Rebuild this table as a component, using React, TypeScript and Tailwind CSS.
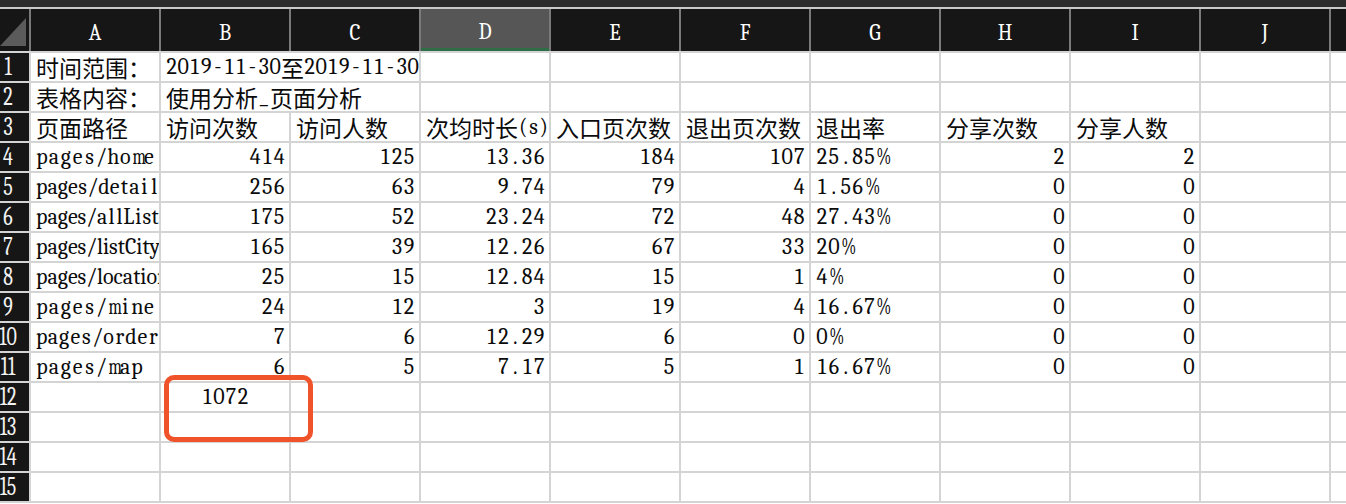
const cols = ["A", "B", "C", "D", "E", "F", "G", "H", "I", "J"]

const data: string[][] = [
  ["时间范围：", "2019-11-30至2019-11-30"],
  ["表格内容：", "使用分析_页面分析"],
  ["页面路径", "访问次数", "访问人数", "次均时长(s)", "入口页次数", "退出页次数", "退出率", "分享次数", "分享人数"],
  ["pages/home", "414", "125", "13.36", "184", "107", "25.85%", "2", "2"],
  ["pages/detail", "256", "63", "9.74", "79", "4", "1.56%", "0", "0"],
  ["pages/allList", "175", "52", "23.24", "72", "48", "27.43%", "0", "0"],
  ["pages/listCity", "165", "39", "12.26", "67", "33", "20%", "0", "0"],
  ["pages/location", "25", "15", "12.84", "15", "1", "4%", "0", "0"],
  ["pages/mine", "24", "12", "3", "19", "4", "16.67%", "0", "0"],
  ["pages/order", "7", "6", "12.29", "6", "0", "0%", "0", "0"],
  ["pages/map", "6", "5", "7.17", "5", "1", "16.67%", "0", "0"],
  [],
  [],
  [],
  [],
]

const wide = new Set(["m", "w", "M", "W", "%"])

// SimSun-like: every ascii char takes half an em, cjk takes a full one
function Chars({ s }: { s: string }) {
  return (
    <>
      {Array.from(s).map((ch, i) =>
        /[\u2e80-\u9fff\u3000-\u303f\uff00-\uffef]/.test(ch) ? (
          <span key={i} className="text-[23px] font-['Noto_Sans_CJK_SC',sans-serif]">{ch}</span>
        ) : (
          <span
            key={i}
            className={wide.has(ch) ? "inline-block w-[11.9px] text-center scale-x-75" : "inline-block w-[11.9px] text-center"}
          >
            {ch}
          </span>
        )
      )}
    </>
  )
}

function Cell({ v, span }: { v?: string; span?: boolean }) {
  const isNum = !!v && /^\d+(\.\d+)?$/.test(v)
  return (
    <div
      className={`bg-white flex items-center overflow-x-clip whitespace-nowrap leading-none ${
        isNum ? "justify-end pr-[4px]" : "justify-start pl-[5px]"
      } ${span ? "col-span-2" : ""}`}
    >
      {v ? <Chars s={v} /> : null}
    </div>
  )
}

export default function App() {
  return (
    <div className="w-[1346px] h-[504px] overflow-hidden bg-white font-serif font-['Liberation_Serif'] text-[22px] text-[#0b0b0b]">
      <div className="h-[7px] bg-[#2b2b2b]" />
      <div className="h-[2px] bg-[#c9c9c9]" />

      {/* column headers */}
      <div className="flex h-[42px] gap-[2px] bg-[#7a7a7a]">
        <div className="w-[29px] shrink-0 bg-[#161616] flex items-start">
          <svg width="29" height="42" viewBox="0 0 29 42">
            <polygon points="0,37 26,37 26,9" fill="#5b5b5b" />
          </svg>
        </div>
        {cols.map((c) => (
          <div
            key={c}
            className={`w-[128px] shrink-0 flex items-center justify-center pt-[5px] text-white ${
              c === "D" ? "bg-[#565656] border-b-[3px] border-[#2d6e46]" : "bg-[#161616]"
            }`}
          >
            <span className="inline-block text-[21px] leading-none scale-y-110">{c}</span>
          </div>
        ))}
        <div className="flex-1 bg-[#161616]" />
      </div>

      <div className="grid grid-cols-[29px_repeat(10,128px)_1fr] auto-rows-[28px] gap-[2px] bg-[#d4d4d4] pt-[2px] pb-[2px]">
        {data.map((row, r) => {
          const cells = []
          cells.push(
            <div key={`n${r}`} className="bg-[#161616] flex items-center overflow-visible">
              <div className="w-[16px] flex justify-center">
                <span className="inline-block text-[20px] leading-none text-[#f2f2f2] scale-y-140">{r + 1}</span>
              </div>
            </div>
          )
          for (let c = 0; c < 10; c++) {
            if (r < 2 && c === 1) {
              cells.push(<Cell key={`${r}-${c}`} v={row[c]} span />)
              c++
              continue
            }
            if (r === 11 && c === 1) {
              cells.push(
                <div key={`${r}-${c}`} className="bg-white relative flex items-center justify-center leading-none">
                  <Chars s="1072" />
                  <div className="absolute left-[3px] top-[-8px] w-[149px] h-[67px] rounded-[10px] border-[5px] border-[#f0522a] z-10" />
                </div>
              )
              continue
            }
            cells.push(<Cell key={`${r}-${c}`} v={row[c]} />)
          }
          cells.push(<div key={`k${r}`} className="bg-white" />)
          return cells
        })}
      </div>
    </div>
  )
}
